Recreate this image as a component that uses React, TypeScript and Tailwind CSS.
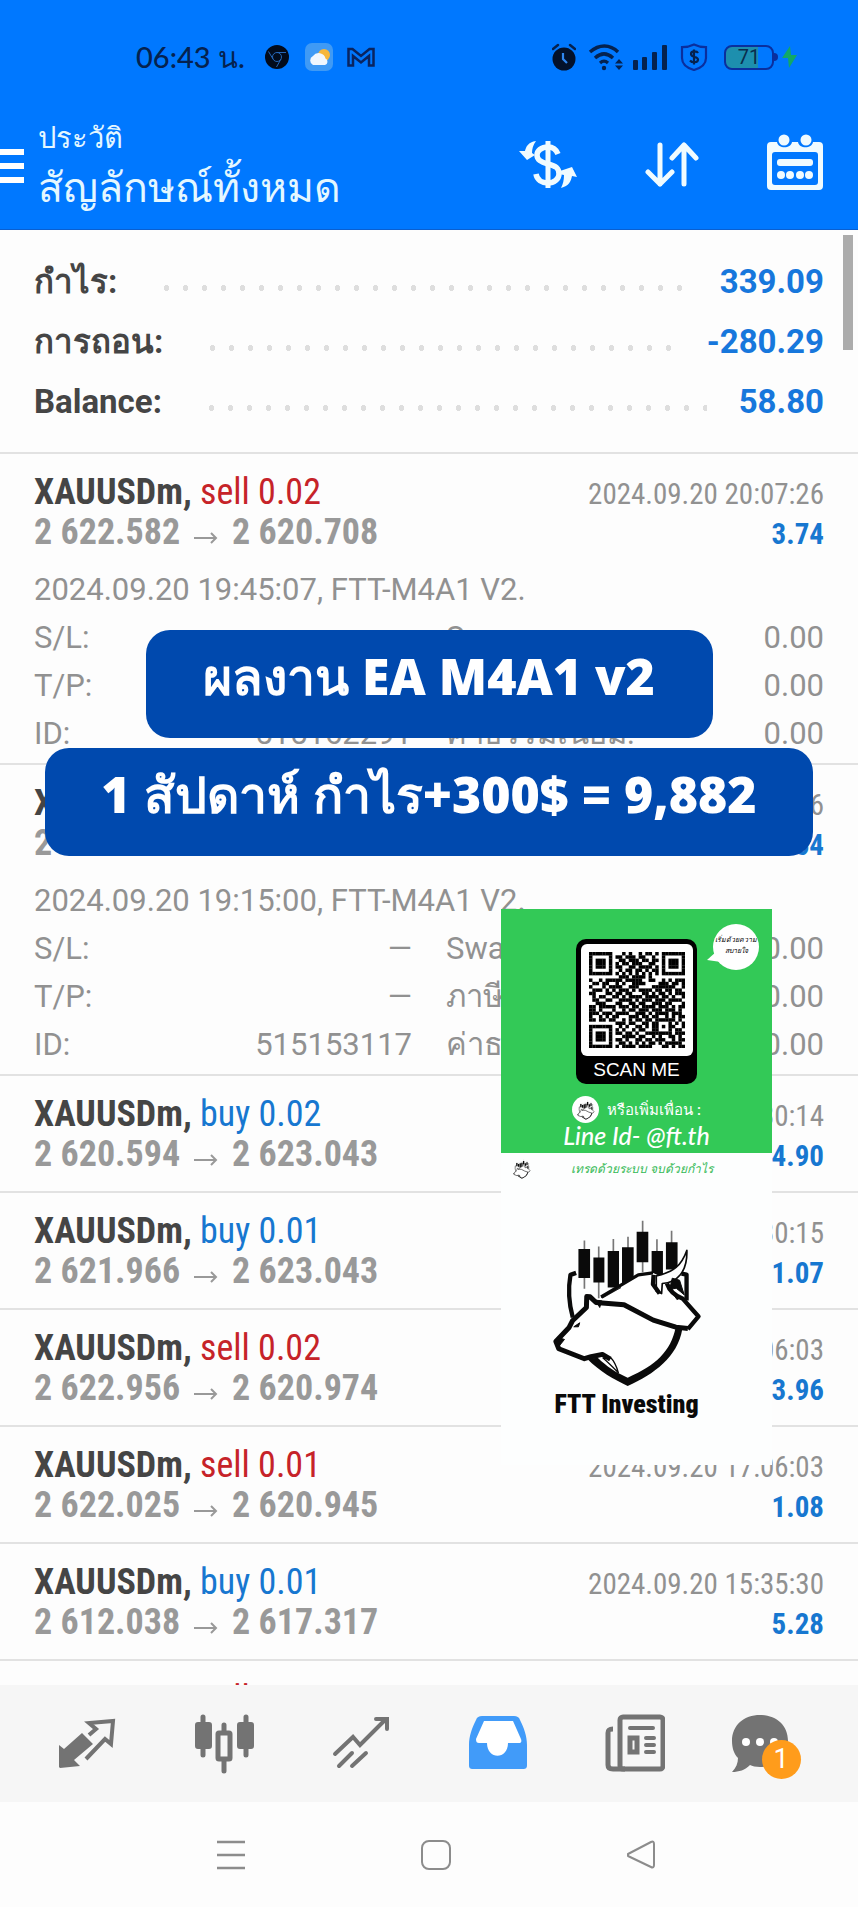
import { clsx } from "clsx";
import type { ReactNode } from "react";

interface Detail {
    placed: string;
    id: string;
    values: string[];
}

interface Trade {
    side: "buy" | "sell";
    volume: string;
    open: string;
    close: string;
    time: string;
    profit: string;
    detail?: Detail;
}

const summary = [
    { label: "กำไร:", value: "339.09" },
    { label: "การถอน:", value: "-280.29" },
    { label: "Balance:", value: "58.80" },
];

const trades: Trade[] = [
    {
        side: "sell",
        volume: "0.02",
        open: "2 622.582",
        close: "2 620.708",
        time: "2024.09.20 20:07:26",
        profit: "3.74",
        detail: { placed: "2024.09.20 19:45:07, FTT-M4A1 V2.", id: "515162291", values: ["0.00", "0.00", "0.00"] },
    },
    {
        side: "sell",
        volume: "0.01",
        open: "2 622.297",
        close: "2 620.763",
        time: "2024.09.20 20:07:26",
        profit: "1.54",
        detail: { placed: "2024.09.20 19:15:00, FTT-M4A1 V2.", id: "515153117", values: ["0.00", "0.00", "0.00"] },
    },
    { side: "buy", volume: "0.02", open: "2 620.594", close: "2 623.043", time: "2024.09.20 18:30:14", profit: "4.90" },
    { side: "buy", volume: "0.01", open: "2 621.966", close: "2 623.043", time: "2024.09.20 18:30:15", profit: "1.07" },
    { side: "sell", volume: "0.02", open: "2 622.956", close: "2 620.974", time: "2024.09.20 17:06:03", profit: "3.96" },
    { side: "sell", volume: "0.01", open: "2 622.025", close: "2 620.945", time: "2024.09.20 17:06:03", profit: "1.08" },
    { side: "buy", volume: "0.01", open: "2 612.038", close: "2 617.317", time: "2024.09.20 15:35:30", profit: "5.28" },
    { side: "sell", volume: "0.02", open: "2 612.114", close: "2 610.020", time: "2024.09.20 14:20:11", profit: "4.19" },
];

const qrRows = [
    "11111110001010010110101111111",
    "10000010110111011001001000001",
    "10111010011011101101101011101",
    "10111010101101110011001011101",
    "10111010110011011110101011101",
    "10000010010110110101101000001",
    "11111110101010101010101111111",
    "00000000011101111010000000000",
    "10010111110111110011001010111",
    "01101100101001111000011101101",
    "10001011110011100001111111001",
    "01110101011101011110110110110",
    "11000110110110001101011010111",
    "01011001101011110111101101001",
    "01100110011110101110111011110",
    "00111000110011011001110110001",
    "11011111011101101111011101011",
    "11010001001011011101110111010",
    "11101110111100111010111101110",
    "10010101100011101101100101011",
    "11011011001010110110111111010",
    "00000000111011001101100010101",
    "11111110010100110101101011001",
    "10000010101001011001100010110",
    "10111010110110100111111110111",
    "10111010001111011001010011010",
    "10111010110100110110111001011",
    "10000010011010101011010111110",
    "11111110101111011110001101011",
];

function StatusIcons() {
    return (
        <div className="flex items-center text-[#05224f]">
            <svg className="mr-3 h-7 w-6" viewBox="0 0 24 28" fill="none" aria-hidden="true">
                <circle cx="12" cy="16" r="11.5" fill="#03112b" />
                <path d="M1 6 6 2M18 2l5 4" stroke="currentColor" strokeWidth="2.5" strokeLinecap="round" />
                <path d="M11 10v6l4 4" stroke="#2f86f0" strokeWidth="2.2" />
            </svg>
            <svg className="mr-2 h-7 w-9" viewBox="0 0 36 28" fill="none" stroke="currentColor" strokeWidth="3.4" aria-hidden="true">
                <path d="M2 9c9-8 20-8 28 0M7 15c6-5.500 12-5.500 18 0M12 20c3-2.500 5-2.500 8 0" />
                <circle cx="16" cy="25" r="2.200" fill="currentColor" stroke="none" />
                <path d="m31 16 4 4.500h-8zM31 27l4-4.500h-8z" fill="currentColor" stroke="none" />
            </svg>
            <svg className="mr-3 h-7 w-9" viewBox="0 0 36 28" fill="currentColor" aria-hidden="true">
                <rect x="1" y="17" width="5" height="10" rx="1" />
                <rect x="10" y="14" width="5" height="13" rx="1" />
                <rect x="20" y="9" width="5" height="18" rx="1" />
                <rect x="30" y="2" width="5" height="25" rx="1" />
            </svg>
            <svg className="mr-4 h-7 w-7" viewBox="0 0 28 28" fill="none" stroke="#0a2f9e" strokeWidth="2.2" aria-hidden="true">
                <path d="M14 1.500c4 2 8 2.700 12 2.700V15c0 6-5 10-12 12C7 25 2 21 2 15V4.200c4 0 8-.7 12-2.700z" />
                <path d="M18 10c-1-2-7-2.500-7 1 0 4 7 2 7 5.500S12 20 10 17.500M14 6.500v15" stroke="#05224f" />
            </svg>
            <div className="flex h-[25px] w-[50px] items-center justify-center rounded-lg border-2 border-[#0a2f9e] bg-linear-to-r from-[#1d8fae] from-70% to-transparent to-70% text-xl leading-5 text-[#0a2d4d]">
                71
            </div>
            <div className="mr-1 h-2 w-1 rounded-r bg-[#0a2f9e]" />
            <svg className="h-6 w-4" viewBox="0 0 16 24" fill="#12a866" aria-hidden="true">
                <path d="M8 1 0 13h6l1 10 8-13H9z" />
            </svg>
        </div>
    );
}

function StatusBar() {
    return (
        <div className="flex h-[114px] items-center justify-between pr-[60px] pl-[136px]">
            <div className="flex items-center">
                <span className="mr-5 font-[Lato] text-[29px] leading-8 font-medium text-[#05224f]">06:43 น.</span>
                <svg className="mr-4 h-6 w-6" viewBox="0 0 24 24" fill="none" stroke="#2566b8" aria-hidden="true">
                    <circle cx="12" cy="12" r="12" fill="#020b1c" stroke="none" />
                    <circle cx="12" cy="12" r="4.500" />
                    <path d="M12 7.500h9M8 14 3.500 6.500M16 14l-4.500 8" />
                </svg>
                <svg className="mr-[14px] h-7 w-7" viewBox="0 0 28 28" aria-hidden="true">
                    <rect width="28" height="28" rx="7" fill="#3f9af5" />
                    <circle cx="19" cy="12" r="6" fill="#f6b73c" />
                    <path d="M8 22a5 5 0 0 1 0-9 7 7 0 0 1 12.500 2.500A3.500 3.500 0 0 1 20 22z" fill="#f1f7fe" />
                </svg>
                <svg className="h-5 w-7" viewBox="0 0 28 20" fill="none" stroke="#0a2460" strokeWidth="2.500" aria-hidden="true">
                    <path d="M1.500 18.500V2h4L14 9l8.500-7h4v16.500H22V9l-8 6.500L6 9v9.500z" />
                </svg>
            </div>
            <StatusIcons />
        </div>
    );
}

function AppBar() {
    return (
        <div className="flex h-[115px] items-start justify-between pr-[35px]">
            <div className="flex">
                <button aria-label="Menu" className="mt-[35px] flex h-[34px] w-6 flex-col justify-between">
                    <span className="h-[6px] w-full bg-white" />
                    <span className="h-[6px] w-full bg-white" />
                    <span className="h-[6px] w-full bg-white" />
                </button>
                <div className="ml-[14px] text-[#e4f7ff]">
                    <p className="pt-1 text-[29px] leading-10">ประวัติ</p>
                    <h1 className="text-[41px] leading-[60px]">สัญลักษณ์ทั้งหมด</h1>
                </div>
            </div>
            <div className="mt-[20px] flex items-center gap-[68px]">
                <button aria-label="Currency">
                    <svg className="h-14 w-[58px]" viewBox="0 0 58 56" fill="none" stroke="#f0fbff" strokeWidth="6" aria-hidden="true">
                        <path d="M29 7v47" strokeWidth="5" />
                        <path d="M39 20c-2-5-5-7-10-7-7 0-11 4-11 8 0 5 4 7 11 9 8 2 11 4 11 10 0 5-5 9-11 9s-11-3-12-9" strokeWidth="5.500" />
                        <path d="M17 7C9 8 7 13 6 17H0l8 9 8-5-3-2c0-4 1-8 4-12zM42 54c8-2 10-7 11-12l5 1-5-10-12 4-1 3 5 1c0 5-1 9-3 13z" fill="#f0fbff" stroke="none" />
                    </svg>
                </button>
                <button aria-label="Sort">
                    <svg className="h-14 w-[54px]" viewBox="0 0 54 56" fill="none" stroke="#f0fbff" strokeWidth="5" strokeLinecap="round" strokeLinejoin="round" aria-hidden="true">
                        <path d="M15 11v39M3 38l12 12 12-12M39 50V11M27 24l12-13 12 13" />
                    </svg>
                </button>
                <button aria-label="Calendar">
                    <svg className="h-14 w-14" viewBox="0 0 56 56" fill="#f0fbff" aria-hidden="true">
                        <path fillRule="evenodd" d="M4 8h6c1 7 14 7 15 0h6c1 7 14 7 15 0h6a4 4 0 0 1 4 4v40a4 4 0 0 1-4 4H4a4 4 0 0 1-4-4V12a4 4 0 0 1 4-4zm4 10a3 3 0 0 0-3 3v27a3 3 0 0 0 3 3h40a3 3 0 0 0 3-3V21a3 3 0 0 0-3-3z" />
                        <circle cx="17" cy="6" r="5.500" />
                        <circle cx="39" cy="6" r="5.500" />
                        <rect x="10" y="25" width="36" height="7" rx="3" />
                        <circle cx="14" cy="41" r="4" />
                        <circle cx="23" cy="41" r="4" />
                        <circle cx="33" cy="41" r="4" />
                        <circle cx="42" cy="41" r="4" />
                    </svg>
                </button>
            </div>
        </div>
    );
}

function Summary() {
    return (
        <section className="h-56 border-b-2 border-[#e2e2e2] px-[34px] pt-[22px]">
            {summary.map((row) => (
                <div key={row.label} className="flex h-[60px] items-center text-[33px] leading-10 font-bold">
                    <span className="text-[#454545]">{row.label}</span>
                    <span className="mt-3 mr-8 ml-10 h-[10px] flex-1 bg-[radial-gradient(circle,#dedede_3px,transparent_3px)] bg-size-[19px_10px] bg-repeat-x" />
                    <span className="text-[#1777dc]">{row.value}</span>
                </div>
            ))}
        </section>
    );
}

function TradeDetail({ detail }: { detail: Detail }) {
    const left = [
        ["S/L:", "—"],
        ["T/P:", "—"],
        ["ID:", detail.id],
    ];
    const right = ["Swap:", "ภาษี:", "ค่าธรรมเนียม:"];

    return (
        <div className="pt-[14px] text-[31px] text-[#919191]">
            <p className="h-12 leading-[48px]">{detail.placed}</p>
            {left.map(([label, value], index) => (
                <div key={label} className="flex h-12 items-center leading-[48px]">
                    <span>{label}</span>
                    <span className="ml-auto">{value}</span>
                    <span className="ml-[34px] flex w-[378px] justify-between">
                        <span>{right[index]}</span>
                        <span>{detail.values[index]}</span>
                    </span>
                </div>
            ))}
        </div>
    );
}

function TradeRow({ trade }: { trade: Trade }) {
    return (
        <li className={clsx("border-b-2 border-[#e2e2e2] px-[34px] pt-[18px]", trade.detail ? "h-[311px]" : "h-[117px]")}>
            <div className="flex h-10 items-baseline justify-between font-['Roboto_Condensed',Roboto,sans-serif] leading-10">
                <span className="text-[36px]">
                    <span className="font-bold text-[#454545]">XAUUSDm, </span>
                    <span className={trade.side === "buy" ? "text-[#1777d0]" : "text-[#c62329]"}>
                        {trade.side} {trade.volume}
                    </span>
                </span>
                <span className="text-[29px] text-[#919191]">{trade.time}</span>
            </div>
            <div className="flex h-10 items-baseline justify-between font-['Roboto_Condensed',Roboto,sans-serif] leading-10 font-bold">
                <span className="flex items-baseline text-[36px] text-[#999]">
                    {trade.open}
                    <svg className="mx-[14px] h-3 w-6" viewBox="0 0 24 12" fill="none" stroke="currentColor" strokeWidth="2" aria-hidden="true">
                        <path d="M0 6h22M17 1l5 5-5 5" />
                    </svg>
                    {trade.close}
                </span>
                <span className="text-[29px] text-[#1777d0]">{trade.profit}</span>
            </div>
            {trade.detail && <TradeDetail detail={trade.detail} />}
        </li>
    );
}

function BearBullLogo({ className }: { className?: string }) {
    return (
        <svg className={className} viewBox="0 0 465 520" fill="none" stroke="#0a0a0a" strokeWidth="13" strokeLinejoin="round" aria-hidden="true">
            <path d="M100 77v145M143 95v155M187 72v50M231 65v50M275 17v155M318 73v50M362 47v50" stroke="#777" strokeWidth="5" />
            <path d="M82 102h35v87H82zM127 128h33v75h-33zM170 108h34v110h-34zM213 97h35v112h-35zM257 50h35v92h-35zM302 108h34v72h-34zM345 82h35v82h-35z" fill="#0a0a0a" stroke="none" />
            <path d="M150 246 265 178l42-4 50 24 40 55 46 52-33 38-100-25-90-50-80-8z" fill="#fff" stroke="none" />
            <path d="M150 246 262 180l44-6" strokeWidth="10" />
            <path d="M150 246l60-28-56 32z" fill="#0a0a0a" strokeWidth="2" />
            <path d="M408 106c-16 46-40 66-92 77v46l16 7 2-30c44-3 76-34 74-100z" fill="#fff" strokeWidth="5" />
            <path d="M308 180l-2 28 20 28" strokeWidth="13" />
            <path d="M348 206c8 24 22 36 48 46l47 53-32 38" strokeWidth="13" />
            <path d="M364 190l22 6 14 44-24-20-20 4zM368 238l20 12-10 4z" fill="#0a0a0a" strokeWidth="3" />
            <path d="M392 176l15 3v78M75 174l-17 6c-7 40-5 85 7 128" strokeWidth="13" />
            <path d="M66 318l40-40 1-34 14 2 18 17 84 5 88 46 74 26c-10 80-72 124-155 162-46-22-80-52-108-74l-18 2-72-30-17-22 45-42z" fill="#fff" stroke="none" />
            <path d="M411 341l-36-4-68-21-88-46-84-7-18-17-10-1-1 33-42 40-10 20-40 42 9 22 77 30 20-6 34-7 24 14" strokeWidth="15" />
            <path d="M180 430c12 12 16 24 22 44-22-22-34-34-46-44z" strokeWidth="4" />
            <path d="M108 432c40 40 78 60 122 82 80-36 150-88 164-170l-20-5c-14 70-60 114-144 150-32-14-64-34-90-60z" fill="#0a0a0a" stroke="none" />
            <path d="m134 256 12 22 6-20zM68 336l18-12-4 12zM20 368l20 6-16 20z" fill="#0a0a0a" strokeWidth="3" />
        </svg>
    );
}

function QrCode() {
    return (
        <svg className="h-24 w-24" viewBox="0 0 29 29" role="img" aria-label="QR">
            {qrRows.map((row, y) =>
                row.split("").map((cell, x) => (cell === "1" ? <rect key={`${x}-${y}`} x={x} y={y} width="1.050" height="1.050" /> : null)),
            )}
        </svg>
    );
}

function PromoCard() {
    return (
        <aside className="absolute top-[909px] right-[86px] w-[271px] bg-[#fdfefe]">
            <div className="relative flex h-[244px] flex-col items-center bg-[#33c957] pt-[30px] text-white">
                <div className="absolute top-[14px] right-3">
                    <svg className="h-12 w-[53px]" viewBox="0 0 53 48" fill="#fff" aria-hidden="true">
                        <path d="M10 28 0 37l14 2z" />
                        <circle cx="29" cy="24" r="23" />
                    </svg>
                    <p className="absolute top-3 right-0 w-12 text-center text-[7px] leading-[11px] font-medium text-black italic">
                        เริ่มด้วยความ
                        <br />
                        สบายใจ
                    </p>
                </div>
                <div className="flex h-[145px] w-[121px] flex-col items-center rounded-[10px] bg-black pt-[5px]">
                    <div className="flex h-28 w-28 items-center justify-center rounded-md bg-white">
                        <QrCode />
                    </div>
                    <p className="font-['Liberation_Sans',sans-serif] text-[19px] leading-7">SCAN ME</p>
                </div>
                <div className="mt-3 flex items-center gap-2">
                    <span className="flex h-[27px] w-[27px] items-center justify-center rounded-full bg-white">
                        <BearBullLogo className="h-5 w-[18px]" />
                    </span>
                    <span className="text-[15px] leading-6 font-medium">หรือเพิ่มเพื่อน :</span>
                </div>
                <p className="font-[Lato] text-[25px] leading-6 font-medium italic">Line Id- @ft.th</p>
            </div>
            <div className="flex h-[312px] flex-col items-center">
                <div className="flex w-full items-center pt-1 pl-3">
                    <BearBullLogo className="h-5 w-[18px]" />
                    <p className="ml-10 text-xs leading-6 font-medium text-[#33b955] italic">เทรดด้วยระบบ จบด้วยกำไร</p>
                </div>
                <BearBullLogo className="mt-[34px] mr-4 h-[173px] w-[155px]" />
                <p className="mr-5 font-['Roboto_Condensed',Roboto,sans-serif] text-[26px] leading-8 font-black text-[#0a0a0a]">FTT Investing</p>
            </div>
        </aside>
    );
}

function Banner({ className, children }: { className?: string; children: ReactNode }) {
    return (
        <p
            className={clsx(
                "h-[108px] max-w-full rounded-3xl bg-[#0049ae] pt-2 text-center font-['Noto_Sans',sans-serif] text-[50px] leading-[76px] font-black whitespace-nowrap text-white",
                className,
            )}
        >
            {children}
        </p>
    );
}

function TabBar() {
    return (
        <nav className="grid h-[117px] shrink-0 grid-cols-6 place-items-center bg-[#f6f6f6] px-[18px] text-[#737373]">
            <button aria-label="Quotes">
                <svg className="h-[60px] w-[58px]" viewBox="0 0 58 60" aria-hidden="true">
                    <path d="m24 19 11 11-19 16 6 6-20 2-1-1V31l5 4z" fill="currentColor" />
                    <path d="m31 21 7-6-7-6 24-2-2 23-6-5-19 20" fill="none" stroke="currentColor" strokeWidth="4" />
                </svg>
            </button>
            <button aria-label="Charts">
                <svg className="h-[60px] w-[60px]" viewBox="0 0 60 60" fill="currentColor" stroke="currentColor" aria-hidden="true">
                    <path d="M9 3v38M52 3v38M30 11v8M30 45v12" strokeWidth="5" strokeLinecap="round" />
                    <rect x="2" y="9" width="15" height="25" rx="2" strokeWidth="2" />
                    <rect x="44" y="9" width="15" height="25" rx="2" strokeWidth="2" />
                    <rect x="24" y="19" width="12" height="26" rx="1" fill="#f6f6f6" strokeWidth="5" />
                </svg>
            </button>
            <button aria-label="Trade">
                <svg className="h-[60px] w-[58px]" viewBox="0 0 58 60" fill="none" stroke="currentColor" strokeWidth="4" strokeLinecap="round" aria-hidden="true">
                    <path d="m3 40 18-17 7 8L53 6M7 52l13-13M20 52l14-13" />
                    <path d="M44 5h11v10" />
                </svg>
            </button>
            <button aria-label="History" className="text-[#419bf9]">
                <svg className="h-[60px] w-[58px]" viewBox="0 0 58 60" fill="currentColor" aria-hidden="true">
                    <path d="M14 5h30l9 24H5z" fill="#fff" />
                    <path d="M16 26h26v16H16z" fill="#fff" />
                    <path fillRule="evenodd" d="M13 2h32c3 0 5 1 6 4 4 8 7 16 7 25v20c0 3-1 4-4 4H4c-3 0-4-1-4-4V31C0 22 3 14 7 6c1-3 3-4 6-4zm2 5L7 25c0 3 1 4 3 4h8c0 17 21 17 21 0h10c3 0 4-1 3-4L44 7z" />
                </svg>
            </button>
            <button aria-label="News">
                <svg className="h-[60px] w-[60px]" viewBox="0 0 60 60" fill="none" stroke="currentColor" strokeWidth="5" aria-hidden="true">
                    <rect x="15" y="3" width="43" height="52" rx="3" />
                    <path d="M8 15c-4 0-5 1-5 4v32c0 3 2 4 5 4h12" />
                    <path d="M25 14h23M41 24h8M41 31h8M41 38h8" strokeWidth="4" strokeLinecap="round" />
                    <rect x="25" y="24" width="7" height="14" strokeWidth="5" />
                </svg>
            </button>
            <button aria-label="Messages" className="relative mr-3 h-[60px] w-[70px]">
                <svg className="h-[60px] w-[58px]" viewBox="0 0 58 60" aria-hidden="true">
                    <path d="M29 1c16 0 28 10 28 26S45 53 29 53c-4 0-8-1-10-2-5 5-11 7-18 7 4-4 6-9 6-14C3 40 1 34 1 27 1 11 13 1 29 1z" fill="currentColor" />
                    <circle cx="15" cy="28" r="4" fill="#fff" />
                    <circle cx="29" cy="28" r="4" fill="#fff" />
                    <circle cx="43" cy="28" r="4" fill="#fff" />
                </svg>
                <span className="absolute top-[26px] right-0 flex h-[39px] w-[39px] items-center justify-center rounded-full bg-[#ff9c1b] text-[27px] leading-8 text-white">1</span>
            </button>
        </nav>
    );
}

function SystemBar() {
    return (
        <nav className="grid h-[105px] shrink-0 grid-cols-3 place-items-center bg-[#fdfdfd] pr-[115px] pl-[128px] text-[#8c8c8c]">
            <button aria-label="Recent apps">
                <svg className="h-[30px] w-[30px]" viewBox="0 0 30 30" stroke="currentColor" strokeWidth="2.500" aria-hidden="true">
                    <path d="M1 2h28M1 15h28M1 28h28" />
                </svg>
            </button>
            <button aria-label="Home" className="h-[30px] w-[30px] rounded-lg border-2 border-[#8c8c8c]" />
            <button aria-label="Back">
                <svg className="h-[30px] w-[30px]" viewBox="0 0 30 30" fill="none" stroke="currentColor" strokeWidth="2" strokeLinejoin="round" aria-hidden="true">
                    <path d="M2 14 25 2c2-1 3 0 3 2v21c0 2-1 3-3 2L2 16z" />
                </svg>
            </button>
        </nav>
    );
}

export default function App() {
    return (
        <div className="relative flex h-screen flex-col overflow-hidden bg-[#fdfdfd] font-[Roboto,sans-serif]">
            <header className="shrink-0 border-b border-[#0a5fd0] bg-[#0078ff]">
                <StatusBar />
                <AppBar />
            </header>

            <main className="relative min-h-0 flex-1 overflow-hidden">
                <Summary />
                <ul>
                    {trades.map((trade) => (
                        <TradeRow key={trade.open} trade={trade} />
                    ))}
                </ul>
                <div className="absolute top-[5px] right-[5px] h-[115px] w-[10px] bg-[#acacac]" />
            </main>

            <TabBar />
            <SystemBar />

            <div className="absolute inset-x-0 top-[630px] flex flex-col items-center gap-[10px]">
                <Banner className="w-[567px]">ผลงาน EA M4A1 v2</Banner>
                <Banner className="w-[768px]">1 สัปดาห์ กำไร+300$ = 9,882</Banner>
            </div>
            <PromoCard />
        </div>
    );
}
